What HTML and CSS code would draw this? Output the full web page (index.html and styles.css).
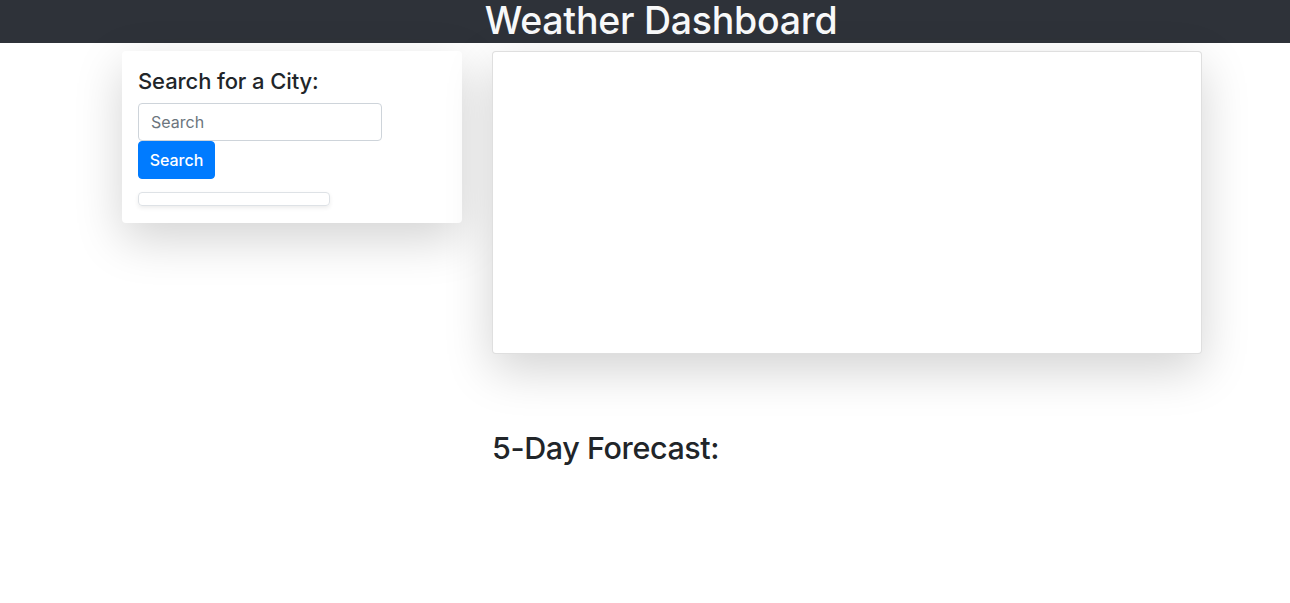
FILE: index.html
```html
<!DOCTYPE html>
<html lang="en">
<head>
<meta charset="utf-8">
<title>Weather Dashboard</title>
<link rel="stylesheet" href="styles.css">
</head>
<body>
<header class="topbar">
  <h1 class="title">Weather Dashboard</h1>
</header>
<main class="layout">
  <aside class="sidebar">
    <section class="card search-card">
      <h4 class="search-heading">Search for a City:</h4>
      <form class="search-form">
        <input class="search-input" type="text" placeholder="Search">
        <button class="search-btn" type="button">Search</button>
      </form>
      <ul class="history"></ul>
    </section>
  </aside>
  <section class="content">
    <div class="card current-card"></div>
    <h2 class="forecast-heading">5-Day Forecast:</h2>
  </section>
</main>
</body>
</html>
```
FILE: styles.css
```css
* { box-sizing: border-box; }
html, body { margin: 0; padding: 0; background: #fff; }
body {
  font-family: Inter, "Noto Sans", "Liberation Sans", sans-serif;
  color: #212529;
  width: 1290px;
  height: 603px;
  overflow: hidden;
}
.topbar {
  background: #2e3239;
  height: 43px;
  display: flex;
  justify-content: center;
  align-items: flex-start;
  padding-left: 32px;
}
.title {
  margin: 0;
  color: #f8f9fa;
  font-weight: 500;
  font-size: 37.5px;
  line-height: 42px;
  letter-spacing: -0.25px;
}
.layout {
  display: flex;
  gap: 30px;
  margin-left: 122px;
  width: 1080px;
  padding-top: 8px;
}
.sidebar { width: 340px; flex: none; }
.content { flex: 1; }
.card {
  background: #fff;
  border-radius: 4px;
  box-shadow: 0 1rem 3rem rgba(0,0,0,.175);
}
.search-card {
  padding: 16px 16px 17px;
}
.search-heading {
  margin: 0 0 8px;
  font-size: 22px;
  font-weight: 500;
  line-height: 28px;
  letter-spacing: -0.1px;
}
.search-form { display: flex; flex-direction: column; align-items: flex-start; }
.search-input {
  width: 244px;
  height: 38px;
  border: 1px solid #ced4da;
  border-radius: 4px;
  padding: 6px 12px;
  font-family: inherit;
  font-size: 16px;
  color: #495057;
  outline: none;
}
.search-input::placeholder { color: #6c757d; opacity: 1; }
.search-btn {
  height: 38px;
  width: 77px;
  border: 1px solid #007bff;
  background: #007bff;
  color: #fff;
  border-radius: 4px;
  font-family: inherit;
  font-size: 16px;
  font-weight: 500;
  padding: 0;
}
.history {
  list-style: none;
  margin: 13px 0 0;
  padding: 0;
  width: 192px;
  height: 14px;
  border: 1px solid #dee2e6;
  border-radius: 4px;
  box-shadow: 0 .125rem .25rem rgba(0,0,0,.075);
}
.current-card {
  height: 303px;
  border: 1px solid rgba(0,0,0,.125);
}
.forecast-heading {
  margin: 75px 0 0;
  font-size: 30.5px;
  font-weight: 500;
  line-height: 38px;
  letter-spacing: -0.4px;
}
```
